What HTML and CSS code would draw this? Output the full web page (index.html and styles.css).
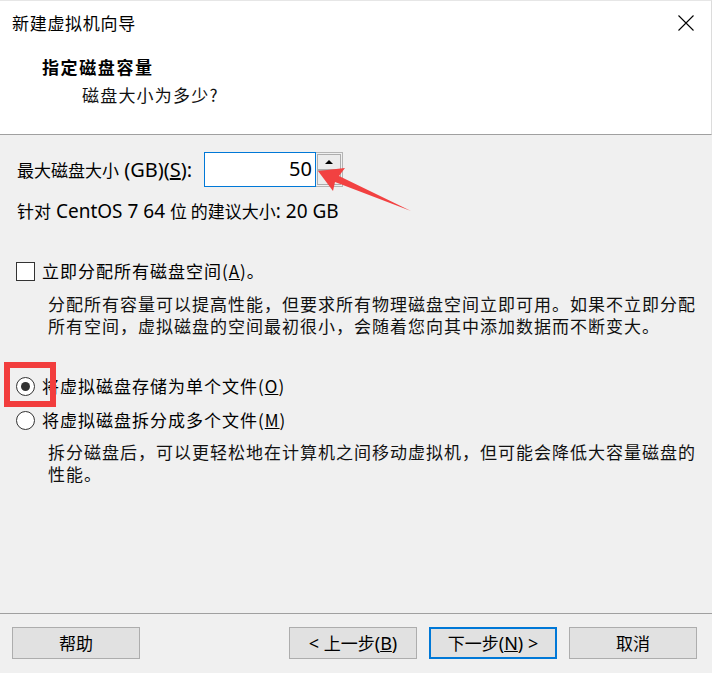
FILE: index.html
```html
<!DOCTYPE html>
<html lang="zh-CN">
<head>
<meta charset="utf-8">
<title>新建虚拟机向导</title>
<link rel="stylesheet" href="styles.css">
</head>
<body>
<div class="window">
  <div class="header">
    <div class="titlebar">
      <span class="title">新建虚拟机向导</span>
      <svg class="close" width="16" height="16" viewBox="0 0 16 16"><path d="M0.5 0.5 L15.5 15.5 M15.5 0.5 L0.5 15.5" stroke="#000" stroke-width="1.1" fill="none"/></svg>
    </div>
    <div class="heading">指定磁盘容量</div>
    <div class="subheading">磁盘大小为多少?</div>
  </div>

  <div class="content">
    <div class="size-row">
      <span class="size-label">最大磁盘大小<span class="lat big"> (GB)(<u>S</u>):</span></span>
      <div class="spin">
        <div class="spin-input">50</div>
        <div class="spin-buttons">
          <div class="spin-btn"><svg width="10" height="6" viewBox="0 0 10 6"><path d="M1 5 L5 1 L9 5 Z" fill="#000"/></svg></div>
          <div class="spin-btn"></div>
        </div>
      </div>
    </div>
    <div class="recommend">针对<span class="lat"> CentOS 7 64 </span>位 的建议大小<span class="lat">: 20 GB</span></div>

    <div class="option check-row">
      <span class="checkbox"></span>
      <span class="opt-label">立即分配所有磁盘空间(<u>A</u>)。</span>
    </div>
    <p class="desc">分配所有容量可以提高性能，但要求所有物理磁盘空间立即可用。如果不立即分配所有空间，虚拟磁盘的空间最初很小，会随着您向其中添加数据而不断变大。</p>

    <div class="option radio-row first">
      <span class="radio checked"></span>
      <span class="opt-label">将虚拟磁盘存储为单个文件(<u>O</u>)</span>
    </div>
    <div class="option radio-row second">
      <span class="radio"></span>
      <span class="opt-label">将虚拟磁盘拆分成多个文件(<u>M</u>)</span>
    </div>
    <p class="desc desc2">拆分磁盘后，可以更轻松地在计算机之间移动虚拟机，但可能会降低大容量磁盘的性能。</p>
  </div>

  <div class="footer">
    <button class="btn">帮助</button>
    <span class="spacer"></span>
    <button class="btn"><span class="lat">&lt; </span>上一步<span class="lat">(<u>B</u>)</span></button>
    <button class="btn primary">下一步<span class="lat">(<u>N</u>) &gt;</span></button>
    <button class="btn">取消</button>
  </div>

  <div class="mark-box"></div>
  <svg class="mark-arrow" width="110" height="60" viewBox="0 0 110 60"><polygon points="8,11 35,8 29,16 101,51 25,22 23,31" fill="#f24141"/></svg>
</div>
</body>
</html>
```

FILE: styles.css
```css
* { box-sizing: border-box; }

html, body {
  margin: 0;
  padding: 0;
}

body {
  background: #f0f0f0;
  font-family: "Noto Sans", "Noto Sans CJK SC", sans-serif;
  font-size: 17px;
  color: #000;
}

.window {
  position: relative;
  width: 712px;
  height: 673px;
  overflow: hidden;
  display: flex;
  flex-direction: column;
  background: #f0f0f0;
}

.lat {
  font-family: "Noto Sans", sans-serif;
  font-size: 19px;
}

.lat.big { font-size: 20px; }

.header {
  height: 135px;
  flex: none;
  background: #fff;
  border-top: 1px solid #e6e6e6;
  border-right: 1px solid #dcdcdc;
  border-bottom: 1px solid #a0a0a0;
}

.titlebar {
  height: 43px;
  display: flex;
  align-items: center;
  justify-content: space-between;
  padding: 0 17px 0 12px;
}

.title {
  font-family: "Noto Sans CJK SC", sans-serif;
  font-size: 17px;
  letter-spacing: 0.7px;
  line-height: 20px;
}

.close { display: block; }

.heading {
  margin: 13px 0 0 42px;
  font-family: "Noto Sans CJK SC", serif;
  font-weight: bold;
  font-size: 17px;
  letter-spacing: 1.6px;
  line-height: 20px;
}

.subheading {
  margin: 8px 0 0 82px;
  font-family: "Noto Sans CJK SC", serif;
  font-size: 17px;
  letter-spacing: 1.2px;
  line-height: 20px;
  color: #111;
}

.content {
  padding: 0 0 0 16px;
}

.size-row {
  margin-top: 17px;
  height: 35px;
  display: flex;
  align-items: center;
}

.size-label {
  padding-left: 1px;
  width: 188px;
  line-height: 22px;
  font-family: "Noto Sans CJK SC", sans-serif;
  white-space: nowrap;
}

.spin {
  display: flex;
  height: 35px;
}

.spin-input {
  width: 112px;
  height: 35px;
  background: #fff;
  border: 1px solid #0078d7;
  text-align: right;
  padding-right: 3px;
  font-family: "Noto Sans", sans-serif;
  font-size: 20px;
  line-height: 32px;
}

.spin-buttons {
  width: 27px;
  height: 35px;
  border: 1px solid #b4b4b4;
  border-left: none;
  background: #f0f0f0;
  padding: 1px;
  display: flex;
  flex-direction: column;
}

.spin-btn {
  flex: 1;
  border: 1px solid #adadad;
  background: #ececec;
  display: flex;
  align-items: center;
  justify-content: center;
}

.recommend {
  margin-top: 13px;
  padding-left: 1px;
  line-height: 22px;
  font-family: "Noto Sans CJK SC", sans-serif;
  white-space: nowrap;
}

.option {
  display: flex;
  align-items: center;
  height: 22px;
}

.opt-label {
  font-family: "Noto Sans CJK SC", serif;
  letter-spacing: 1px;
  line-height: 22px;
  margin-left: 7px;
}

.check-row { margin-top: 38px; }

.checkbox {
  width: 19px;
  height: 19px;
  border: 1px solid #333;
  background: #fff;
  flex: none;
}

.radio {
  width: 19px;
  height: 19px;
  border: 1px solid #333;
  border-radius: 50%;
  background: #fff;
  flex: none;
  display: flex;
  align-items: center;
  justify-content: center;
}

.radio.checked::after {
  content: "";
  width: 9px;
  height: 9px;
  border-radius: 50%;
  background: #333;
}

.desc {
  margin: 11px 0 0 0;
  padding-left: 32px;
  width: 684px;
  font-family: "Noto Sans CJK SC", serif;
  font-size: 17px;
  letter-spacing: 1px;
  line-height: 22px;
  color: #111;
}

.radio-row.first { margin-top: 38px; }
.radio-row.second { margin-top: 12px; }
.desc.desc2 { margin-top: 10px; }

.footer {
  margin-top: auto;
  margin-bottom: 14px;
  border-top: 1px solid #a0a0a0;
  padding: 13px 15px 0 12px;
  display: flex;
  gap: 12px;
}

.spacer { flex: 1; }

.btn {
  width: 128px;
  height: 32px;
  background: #e1e1e1;
  border: 1px solid #adadad;
  font-family: "Noto Sans CJK SC", sans-serif;
  font-size: 17px;
  color: #000;
  padding: 0;
  line-height: 28px;
  white-space: nowrap;
}

.btn .lat { font-size: 18px; }

.btn.primary {
  border: 2px solid #0078d7;
}

.mark-box {
  position: absolute;
  left: 4px;
  top: 362px;
  width: 52px;
  height: 45px;
  border: 6px solid #f23d3d;
}

.mark-arrow {
  position: absolute;
  left: 310px;
  top: 160px;
}
```
